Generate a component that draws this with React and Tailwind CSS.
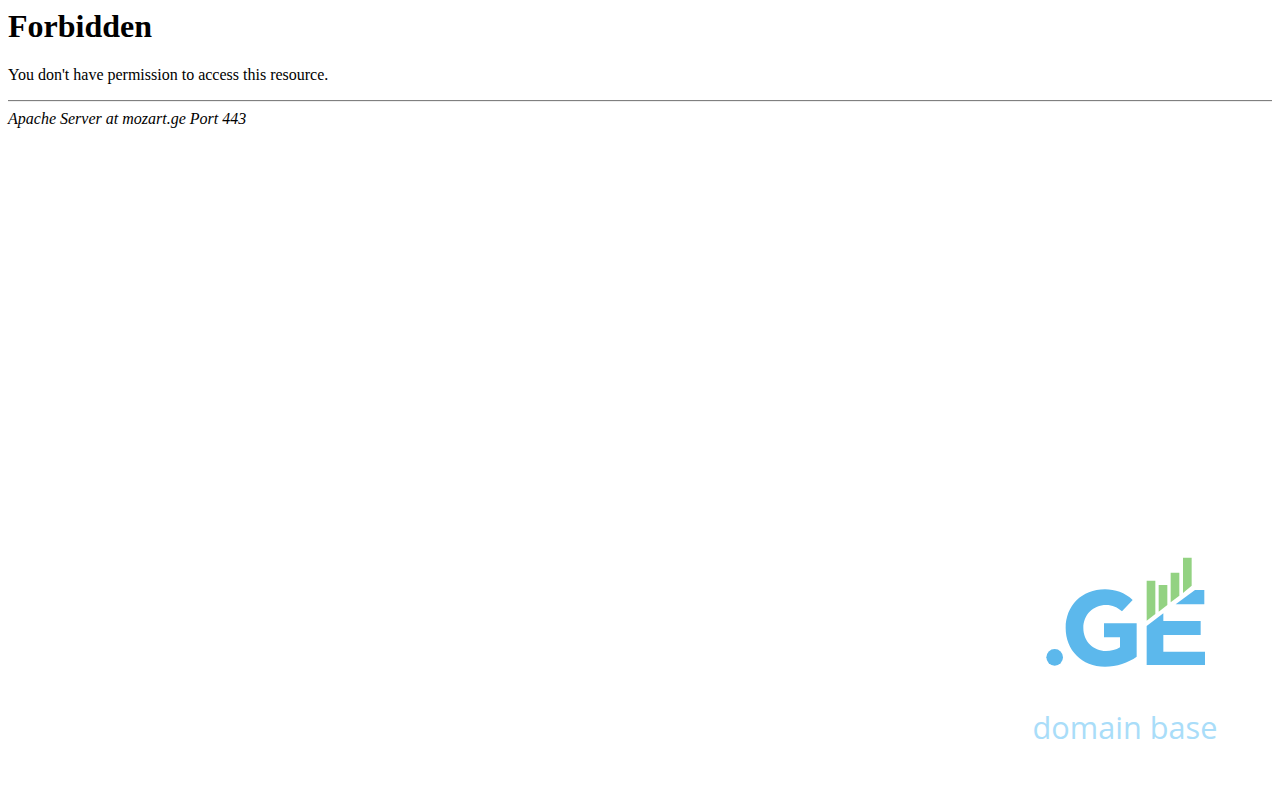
import React from 'react';

const GeLogo = () => (
  <svg width="190" height="125" viewBox="0 0 570 375" className="block">
    {/* bars */}
    <g fill="#93d282">
      <path d="M350 92h26v100l-26 20z" />
      <path d="M386 105h26v60l-26 20z" />
      <path d="M422 68h26v69l-26 20z" />
      <path d="M459 23h26v84l-26 22z" />
    </g>
    <g fill="#5cb8ec">
      <circle cx="74" cy="322" r="25" />
      <path d="M308 150C285 128 255 118 225 118C155 118 107 168 107 234C107 300 155 350 225 350C260 350 295 338 320 320L320 220L222 220L222 262L270 262L270 292C258 300 243 303 228 303C190 303 160 274 160 234C160 194 190 165 228 165C248 165 262 172 276 184Z" />
      <path d="M495 120H523V163H437Z" />
      <path d="M350 228L400 190V213H512V255H400V305H525V345H350Z" />
    </g>
  </svg>
);

export default function App() {
  return (
    <div className="h-screen overflow-hidden bg-white p-2 flex flex-col text-black font-['Liberation_Serif',serif] text-base">
      <h1 className="text-[32px] font-bold leading-[37px] mb-[21.44px]">Forbidden</h1>
      <p className="leading-[18px] mb-4">You don't have permission to access this resource.</p>
      <hr className="border-t border-b border-t-[#808080] border-b-[#eeeeee] mb-2" />
      <address className="italic leading-[18px]">Apache Server at mozart.ge Port 443</address>

      <div className="mt-auto self-end mr-[52px] mb-[45px] flex flex-col items-center">
        <GeLogo />
        <span className="mt-[32px] font-['Open_Sans',sans-serif] text-[30.7px] leading-[40px] text-[#a9ddf9]">domain base</span>
      </div>
    </div>
  );
}
